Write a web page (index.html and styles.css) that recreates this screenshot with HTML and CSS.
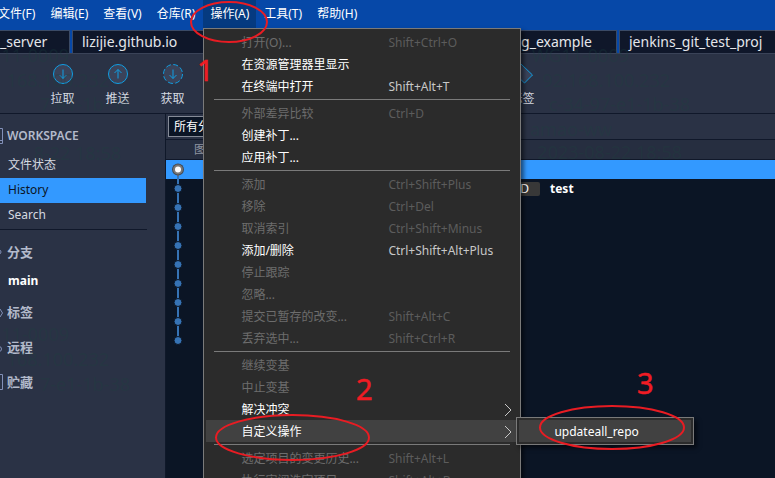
FILE: index.html
```html
<!DOCTYPE html>
<html lang="zh-CN">
<head>
<meta charset="utf-8">
<title>Sourcetree</title>
<link rel="stylesheet" href="styles.css">
</head>
<body>
<div class="app">
  <nav class="menubar">
    <button class="menubar-item">文件(F)</button>
    <button class="menubar-item">编辑(E)</button>
    <button class="menubar-item">查看(V)</button>
    <button class="menubar-item">仓库(R)</button>
    <div class="menu-anchor">
      <button class="menubar-item active">操作(A)</button>
      <div class="menu main-menu">
        <button class="menu-item" disabled><span>打开(O)...</span><kbd>Shift+Ctrl+O</kbd></button>
        <button class="menu-item"><span>在资源管理器里显示</span></button>
        <button class="menu-item"><span>在终端中打开</span><kbd>Shift+Alt+T</kbd></button>
        <hr>
        <button class="menu-item" disabled><span>外部差异比较</span><kbd>Ctrl+D</kbd></button>
        <button class="menu-item"><span>创建补丁...</span></button>
        <button class="menu-item"><span>应用补丁...</span></button>
        <hr>
        <button class="menu-item" disabled><span>添加</span><kbd>Ctrl+Shift+Plus</kbd></button>
        <button class="menu-item" disabled><span>移除</span><kbd>Ctrl+Del</kbd></button>
        <button class="menu-item" disabled><span>取消索引</span><kbd>Ctrl+Shift+Minus</kbd></button>
        <button class="menu-item"><span>添加/删除</span><kbd>Ctrl+Shift+Alt+Plus</kbd></button>
        <button class="menu-item" disabled><span>停止跟踪</span></button>
        <button class="menu-item" disabled><span>忽略...</span></button>
        <button class="menu-item" disabled><span>提交已暂存的改变...</span><kbd>Shift+Alt+C</kbd></button>
        <button class="menu-item" disabled><span>丢弃选中...</span><kbd>Shift+Ctrl+R</kbd></button>
        <hr>
        <button class="menu-item" disabled><span>继续变基</span></button>
        <button class="menu-item" disabled><span>中止变基</span></button>
        <button class="menu-item"><span>解决冲突</span><svg class="chevron" viewBox="0 0 8 14"><path d="M1 1l6 6-6 6"/></svg></button>
        <div class="menu-anchor">
          <button class="menu-item open"><span>自定义操作</span><svg class="chevron" viewBox="0 0 8 14"><path d="M1 1l6 6-6 6"/></svg></button>
          <div class="menu sub-menu">
            <button class="menu-item open"><span>updateall_repo</span></button>
          </div>
        </div>
        <hr>
        <button class="menu-item" disabled><span>选定项目的变更历史...</span><kbd>Shift+Alt+L</kbd></button>
        <button class="menu-item" disabled><span>执行审阅选定项目...</span><kbd>Shift+Alt+B</kbd></button>
      </div>
    </div>
    <button class="menubar-item">工具(T)</button>
    <button class="menubar-item">帮助(H)</button>
  </nav>

  <div class="tabs">
    <button class="tab first">_server</button>
    <button class="tab">lizijie.github.io</button>
    <button class="tab wide">g_example</button>
    <button class="tab last">jenkins_git_test_proj</button>
  </div>

  <div class="toolbar">
    <button class="tool"><svg viewBox="0 0 22 22"><circle cx="11" cy="11" r="9.5"/><path d="M11 6.500v9M7.500 12l3.500 3.500 3.500-3.500"/></svg>拉取</button>
    <button class="tool"><svg viewBox="0 0 22 22"><circle cx="11" cy="11" r="9.500"/><path d="M11 15.500v-9M7.500 10l3.500-3.500 3.500 3.500"/></svg>推送</button>
    <button class="tool"><svg viewBox="0 0 22 22"><circle cx="11" cy="11" r="9.500" stroke-dasharray="5 2.460"/><path d="M11 6.500v9M7.500 12l3.500 3.500 3.500-3.500"/></svg>获取</button>
    <button class="tool tag"><svg viewBox="0 0 22 22"><path class="shape" d="M1 1h8l11.500 11-8 8L1 9z"/></svg>标签</button>
  </div>

  <div class="body">
    <aside class="sidebar">
      <h2 class="heading"><svg viewBox="0 0 6 18"><path d="M0 1.500h2.500v15H0M0 13.500h2"/></svg>WORKSPACE</h2>
      <a class="entry" href="#">文件状态</a>
      <a class="entry selected" href="#">History</a>
      <a class="entry" href="#">Search</a>
      <hr>
      <h2 class="heading group branches"><svg viewBox="0 0 6 18"><circle cx="-1" cy="9" r="2"/></svg>分支</h2>
      <a class="entry current" href="#">main</a>
      <h2 class="heading group"><svg viewBox="0 0 6 18"><path d="M-2 7l2-1 2.500 4-2.500 4"/></svg>标签</h2>
      <h2 class="heading group"><svg viewBox="0 0 6 18"><circle cx="-1" cy="11" r="2.500"/></svg>远程</h2>
      <h2 class="heading group"><svg viewBox="0 0 6 18"><path d="M0 1.500h2.500v15H0"/></svg>贮藏</h2>
    </aside>
    <main class="history">
      <div class="filter">
        <select aria-label="分支"><option>所有分支</option></select>
      </div>
      <table class="commits">
        <thead><tr><th class="graph-col">图谱</th><th></th></tr></thead>
        <tbody>
          <tr class="picked"><td><svg viewBox="0 0 24 19"><path class="halo" d="M12 9v10"/><path class="stem" d="M12 9v7"/><circle class="rim" cx="12" cy="9.500" r="6"/><circle class="ring" cx="12" cy="9.500" r="4"/></svg></td><td></td></tr>
          <tr><td><svg viewBox="0 0 24 19"><path d="M12 0v19"/><circle cx="12" cy="9.500" r="4"/></svg></td><td class="message"><span class="badge">HEAD</span><b>test</b></td></tr>
          <tr><td><svg viewBox="0 0 24 19"><path d="M12 0v19"/><circle cx="12" cy="9.500" r="4"/></svg></td><td></td></tr>
          <tr><td><svg viewBox="0 0 24 19"><path d="M12 0v19"/><circle cx="12" cy="9.500" r="4"/></svg></td><td></td></tr>
          <tr><td><svg viewBox="0 0 24 19"><path d="M12 0v19"/><circle cx="12" cy="9.500" r="4"/></svg></td><td></td></tr>
          <tr><td><svg viewBox="0 0 24 19"><path d="M12 0v19"/><circle cx="12" cy="9.500" r="4"/></svg></td><td></td></tr>
          <tr><td><svg viewBox="0 0 24 19"><path d="M12 0v19"/><circle cx="12" cy="9.500" r="4"/></svg></td><td></td></tr>
          <tr><td><svg viewBox="0 0 24 19"><path d="M12 0v19"/><circle cx="12" cy="9.500" r="4"/></svg></td><td></td></tr>
          <tr><td><svg viewBox="0 0 24 19"><path d="M12 0v19"/><circle cx="12" cy="9.500" r="4"/></svg></td><td></td></tr>
          <tr><td><svg viewBox="0 0 24 19"><path d="M12 0v9"/><circle cx="12" cy="9.500" r="4"/></svg></td><td></td></tr>
        </tbody>
      </table>
    </main>
  </div>

  <svg class="watermark" width="775" height="478" viewBox="0 0 775 478">
    <text x="69" y="62">11-0009</text>
    <text x="109" y="87">168.100.232</text>
    <text x="130" y="111">7-e1-1b-38</text>
    <text x="121" y="160">8-22 18:58</text>
    <text x="629" y="62">WG11-0009</text>
    <text x="670" y="87">92.168.100.232</text>
    <text x="690" y="111">c-34-97-e1-1b-38</text>
    <text x="612" y="136">amao-ww</text>
    <text x="682" y="159">2023-08-22 18:58</text>
    <text x="69" y="341">11-0009</text>
    <text x="109" y="366">168.100.232</text>
    <text x="130" y="391">7-e1-1b-38</text>
  </svg>

  <svg class="notes" width="775" height="478" viewBox="0 0 775 478">
    <ellipse cx="229" cy="22" rx="38" ry="20"/>
    <ellipse cx="292.500" cy="437.500" rx="76.500" ry="22.500"/>
    <ellipse cx="612" cy="427.500" rx="72" ry="21.500"/>
    <text x="197" y="81">1</text>
    <text x="356" y="400">2</text>
    <text x="637" y="394">3</text>
  </svg>
</div>
</body>
</html>
```
FILE: styles.css
```css
* { box-sizing: border-box; }

body {
  margin: 0;
  overflow: hidden;
  background: #0b1525;
  color: #d5d9e0;
  font: 12px/18px "Noto Sans", "Noto Sans CJK SC", sans-serif;
}

button, select, kbd {
  font: inherit;
  color: inherit;
}

button {
  margin: 0;
  padding: 0;
  border: 0;
  background: none;
  white-space: nowrap;
}

a { color: inherit; text-decoration: none; }

.app {
  position: relative;
  display: flex;
  flex-direction: column;
  height: 100vh;
  overflow: hidden;
}

/* Menu bar */
.menubar {
  display: flex;
  gap: 1px;
  height: 30px;
  flex: none;
  margin-left: -9px;
  background: #0648a8;
  color: #fff;
}

.menubar-item {
  height: 28px;
  padding: 0 7px;
}

.menubar-item.active { background: #053a80; }

.menu-anchor { position: relative; }

.menu {
  position: absolute;
  z-index: 2;
  padding: 2px;
  border: 1px solid #7a7a7a;
  background: #2b2b2b;
  box-shadow: 3px 3px 4px rgba(0, 0, 0, 0.5);
}

.main-menu {
  top: 28px;
  left: 0;
  width: 318px;
}

.sub-menu {
  top: -3px;
  left: 310px;
  width: 178px;
}

.menu-item {
  display: grid;
  grid-template-columns: 147px 1fr auto;
  align-items: center;
  width: 100%;
  height: 22px;
  padding: 2px 6px 0 35px;
  text-align: left;
  color: #fff;
}

.menu-item kbd { color: #c8c8c8; }
.menu-item:disabled { color: #6d6d6d; }
.menu-item:disabled kbd { color: #5c5c5c; }
.menu-item.open { background: #414141; }
.sub-menu .menu-item { grid-template-columns: 1fr; }

.chevron {
  grid-column: 3;
  width: 8px;
  height: 14px;
  fill: none;
  stroke: #c8c8c8;
}

.menu hr {
  height: 1px;
  margin: 2px 8px;
  border: 0;
  background: #7a7a7a;
}

/* Repository tabs */
.tabs {
  display: grid;
  grid-template-columns: 70px 136px 1fr 156px;
  gap: 2px;
  flex: none;
  height: 23px;
  background: #0648a8;
}

.tab {
  padding: 0 9px;
  overflow: hidden;
  border: 1px solid #3a4a66;
  border-bottom: 0;
  background: #0f172a;
  color: #e4e6ea;
  font-size: 14px;
  text-align: left;
}

.tab.first { padding-left: 0; border-left: 0; }
.tab.wide { padding-right: 24px; text-align: right; }
.tab.last { border-right: 0; }

/* Toolbar */
.toolbar {
  display: flex;
  flex: none;
  height: 61px;
  padding: 9px 0 0 35px;
  border-top: 1px solid #3a4358;
  border-bottom: 1px solid #10182a;
  background: #2a3245;
}

.tool {
  display: flex;
  flex-direction: column;
  align-items: center;
  gap: 5px;
  width: 55px;
}

.tool.tag { margin-left: 295px; }

.tool svg {
  width: 22px;
  height: 22px;
  fill: none;
  stroke: #109fe4;
}

.tool circle, .tool .shape { fill: #3a435a; }

/* Sidebar */
.body {
  display: flex;
  flex: 1;
  min-height: 0;
}

.sidebar {
  flex: none;
  width: 166px;
  padding-top: 9px;
  border-right: 1px solid #0f1829;
  background: #2a3245;
}

.heading {
  display: flex;
  align-items: center;
  gap: 1px;
  height: 25px;
  margin: 0 0 5px;
  color: #b3bacb;
  font-size: 12px;
  font-weight: 600;
}

.heading svg {
  width: 6px;
  height: 18px;
  fill: none;
  stroke: #8290b8;
}

.heading.group {
  margin-bottom: 10px;
  font-size: 13px;
}

.heading.branches { margin-bottom: 5px; }

.entry {
  display: block;
  width: 146px;
  padding: 3px 8px 4px;
}

.entry.selected { background: #3399ff; color: #0b1525; }
.entry.current { margin-bottom: 5px; color: #fff; font-weight: 700; }

.sidebar hr {
  width: 147px;
  height: 1px;
  margin: 1px 0 9px;
  border: 0;
  background: #10182a;
}

/* History */
.history { flex: 1; min-width: 0; }

.filter {
  height: 26px;
  padding: 2px;
  border-bottom: 1px solid #10182a;
  background: #2a3245;
}

.filter select {
  display: block;
  width: 120px;
  height: 21px;
  padding: 1px 5px 0;
  border: 1px solid #858b97;
  border-radius: 0;
  appearance: none;
  background: #0b1525;
  color: #fff;
}

.commits {
  width: 100%;
  border-spacing: 0;
  table-layout: fixed;
}

.commits th {
  height: 20px;
  padding: 0;
  border-bottom: 1px solid #10182a;
  background: #262e40;
  color: #8f95a1;
  font-weight: 400;
}

.graph-col { width: 80px; }

.commits td { height: 19px; padding: 0; line-height: 16px; }

.commits td svg {
  display: block;
  width: 24px;
  height: 19px;
  fill: #3673b5;
  stroke: #3673b5;
  stroke-width: 2px;
}

.commits td circle { stroke: #0b1525; stroke-width: 1px; }
.commits .picked { background: #3399ff; }
.commits .picked .stem { stroke: #777; }
.commits .picked .rim { fill: #444b55; stroke: none; }
.commits .picked .ring { fill: #fff; stroke: #777; stroke-width: 2px; }

.commits .message { padding-left: 245px; color: #fff; }

.badge {
  display: inline-block;
  margin-right: 10px;
  padding: 0 11px 0 6px;
  border-radius: 2px;
  background: #383838;
  line-height: 14px;
}

/* Faint device stamp printed across the window */
.watermark {
  position: absolute;
  z-index: 1;
  top: 0;
  left: 0;
  fill: rgba(28, 66, 62, 0.28);
  font-size: 18px;
  text-anchor: end;
  pointer-events: none;
}

/* Numbered callouts over the window */
.notes {
  position: absolute;
  z-index: 3;
  top: 0;
  left: 0;
  fill: none;
  stroke: #e81c23;
  stroke-width: 2px;
  pointer-events: none;
}

.notes text {
  fill: #f01c24;
  stroke: #f01c24;
  stroke-width: 0.5px;
  font-size: 29px;
}
```
